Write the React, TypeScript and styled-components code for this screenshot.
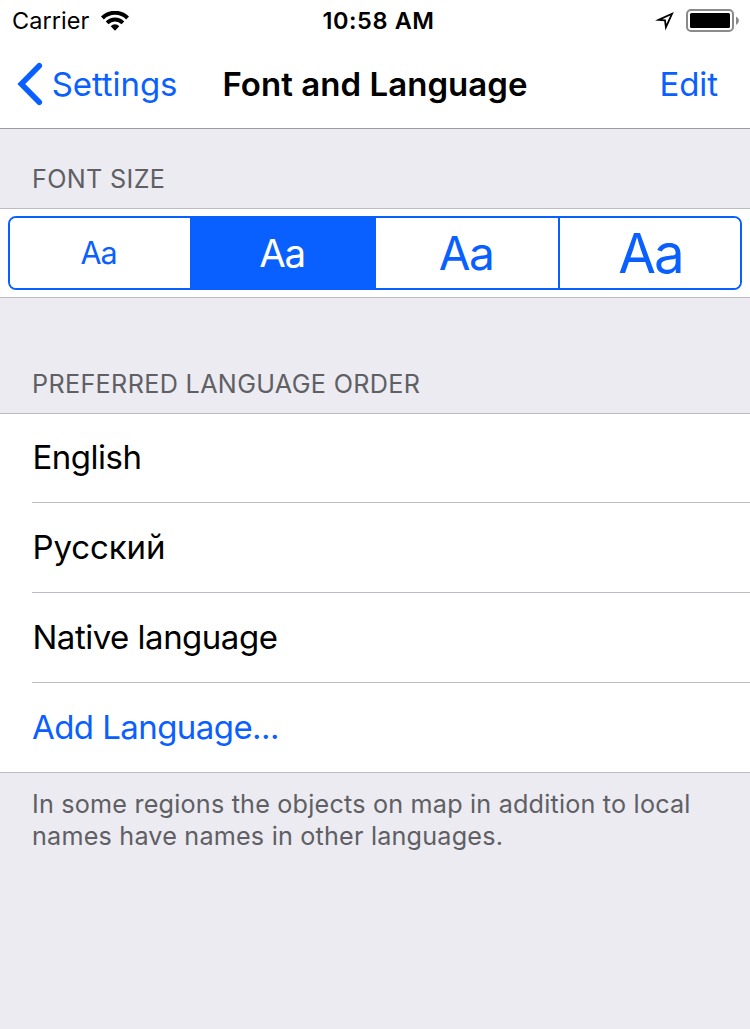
import React from 'react';
import styled, { createGlobalStyle } from 'styled-components';

const BLUE = '#0a60ff';
const HAIRLINE = '#bcbbc1';

const GlobalStyle = createGlobalStyle`
  *, *::before, *::after { box-sizing: border-box; }
  body {
    margin: 0;
    background: #ebebf1;
    color: #000;
    font-family: Inter, 'Liberation Sans', sans-serif;
  }
  button { font: inherit; border: 0; margin: 0; padding: 0; background: none; color: inherit; }
`;

const Screen = styled.main`
  width: 750px;
  min-height: 1029px;
  background: #ebebf1;
`;

const Header = styled.header`
  background: #fff;
  border-bottom: 1px solid #9a9a9f;
`;

const StatusBar = styled.div`
  display: grid;
  grid-template-columns: 1fr auto 1fr;
  align-items: center;
  height: 40px;
  padding: 1px 10px 0 12px;
  font-size: 23.5px;
  line-height: 40px;
`;

const StatusGroup = styled.div<{ $end?: boolean }>`
  display: flex;
  align-items: center;
  justify-content: ${p => (p.$end ? 'flex-end' : 'flex-start')};
  gap: 12px;
`;

const Carrier = styled.span`
  letter-spacing: 0.05px;
`;

const Clock = styled.time`
  padding-left: 5px;
  font-weight: 600;
  font-size: 23.5px;
  letter-spacing: 0.6px;
`;

const NavBar = styled.nav`
  display: grid;
  grid-template-columns: 1fr auto 1fr;
  align-items: center;
  height: 88px;
  padding: 0 17px;
  font-size: 33px;
  line-height: 88px;
`;

const NavButton = styled.button<{ $end?: boolean }>`
  display: flex;
  align-items: center;
  justify-self: ${p => (p.$end ? 'end' : 'start')};
  padding-right: ${p => (p.$end ? 15 : 0)}px;
  gap: 8.7px;
  color: ${BLUE};
  letter-spacing: -0.08px;
`;

const Title = styled.h1`
  margin: 0;
  font-size: 33px;
  font-weight: 600;
  letter-spacing: 0.05px;
`;

const SectionTitle = styled.h2<{ $height: number }>`
  display: flex;
  align-items: flex-end;
  height: ${p => p.$height}px;
  margin: 0;
  padding: 0 32px 14px;
  font-size: 25.2px;
  font-weight: 400;
  line-height: 30px;
  letter-spacing: 0.33px;
  color: #5f5f64;
  text-transform: uppercase;
`;

const SizePanel = styled.div`
  padding: 7px 8px;
  background: #fff;
  border-top: 1px solid ${HAIRLINE};
  border-bottom: 1px solid ${HAIRLINE};
`;

const Segments = styled.div`
  display: grid;
  grid-template-columns: 180px 186px 184px 180px;
  height: 74px;
  border: 2px solid ${BLUE};
  border-radius: 8px;
  overflow: hidden;
`;

const Segment = styled.button<{ $size: number; $selected?: boolean; $divided?: boolean }>`
  padding: 1px 2px 0 0;
  font-size: ${p => p.$size}px;
  line-height: 69px;
  letter-spacing: -0.035em;
  color: ${p => (p.$selected ? '#fff' : BLUE)};
  background: ${p => (p.$selected ? BLUE : '#fff')};
  border-right: ${p => (p.$divided ? `2px solid ${BLUE}` : '0')};

  &:first-child { padding: 0 3px 1px 0; }
  &:last-child { padding: 1px 0 0 1px; }
`;

const LanguageList = styled.ul`
  margin: 0;
  padding: 0 0 0 32px;
  list-style: none;
  background: #fff;
  border-top: 1px solid ${HAIRLINE};
  border-bottom: 1px solid ${HAIRLINE};
`;

const LanguageRow = styled.li<{ $action?: boolean }>`
  height: 90px;
  padding-left: ${p => (p.$action ? 0 : 0.5)}px;
  font-size: 33px;
  line-height: 89px;
  letter-spacing: ${p => (p.$action ? -0.57 : -0.5)}px;
  color: ${p => (p.$action ? BLUE : '#000')};
  border-bottom: 1px solid ${HAIRLINE};

  &:first-child { height: 89px; line-height: 87px; }
  &:last-child { height: 89px; border-bottom: 0; }
  &:lang(ru) { letter-spacing: -0.1px; }
`;

const Footnote = styled.p`
  margin: 0;
  padding: 15px 32px;
  font-size: 25.2px;
  line-height: 32px;
  letter-spacing: 0.19px;
  color: #5f5f64;
`;

const WifiIcon = () => (
  <svg width="28" height="20" viewBox="0 0 28 20" fill="none" stroke="#000">
    <path d="M1.4 7A17.8 17.8 0 0 1 26.6 7" strokeWidth="4" />
    <path d="M6.1 11.8A11.2 11.2 0 0 1 21.9 11.8" strokeWidth="3.9" />
    <path d="M9.7 15.2A5.9 5.9 0 0 1 18.3 15.2L14 19.8Z" fill="#000" stroke="none" />
  </svg>
);

const LocationIcon = () => (
  <svg width="20" height="20" viewBox="0 0 20 20">
    <path
      d="M4.6 8.9L18 2.8L11.9 16.2L11 9.4Z"
      fill="none"
      stroke="#000"
      strokeWidth="1.8"
      strokeMiterlimit="10"
    />
  </svg>
);

const BatteryIcon = () => (
  <svg width="54" height="24" viewBox="0 0 54 24">
    <rect x="1" y="1" width="46" height="21" rx="4" fill="#fff" stroke="#8a8a8a" strokeWidth="2" />
    <rect x="4" y="4" width="40" height="15" rx="1.5" fill="#000" />
    <path d="M50 7.5Q53 9 53 11.5T50 16Z" fill="#8a8a8a" />
  </svg>
);

const BackIcon = () => (
  <svg width="26" height="44" viewBox="0 0 26 44">
    <path d="M22.3 3.7L4.3 22L22.3 40.3" fill="none" stroke={BLUE} strokeWidth="5.6" strokeLinecap="round" />
  </svg>
);

const sizes = [30.5, 38.5, 46, 54.7];
const languages = [
  { name: 'English', lang: 'en' },
  { name: 'Русский', lang: 'ru' },
  { name: 'Native language', lang: 'en' },
];

export default function App() {
  return (
    <Screen>
      <GlobalStyle />
      <Header>
        <StatusBar>
          <StatusGroup><Carrier>Carrier</Carrier><WifiIcon /></StatusGroup>
          <Clock>10:58 AM</Clock>
          <StatusGroup $end><LocationIcon /><BatteryIcon /></StatusGroup>
        </StatusBar>
        <NavBar>
          <NavButton><BackIcon />Settings</NavButton>
          <Title>Font and Language</Title>
          <NavButton $end>Edit</NavButton>
        </NavBar>
      </Header>
      <SectionTitle $height={79}>Font size</SectionTitle>
      <SizePanel>
        <Segments>
          {sizes.map((size, i) => (
            <Segment key={size} $size={size} $selected={i === 1} $divided={i === 2}>Aa</Segment>
          ))}
        </Segments>
      </SizePanel>
      <SectionTitle $height={115}>Preferred language order</SectionTitle>
      <LanguageList>
        {languages.map(({ name, lang }) => <LanguageRow key={name} lang={lang}>{name}</LanguageRow>)}
        <LanguageRow $action>Add Language...</LanguageRow>
      </LanguageList>
      <Footnote>
        In some regions the objects on map in addition to local names have names in other languages.
      </Footnote>
    </Screen>
  );
}
